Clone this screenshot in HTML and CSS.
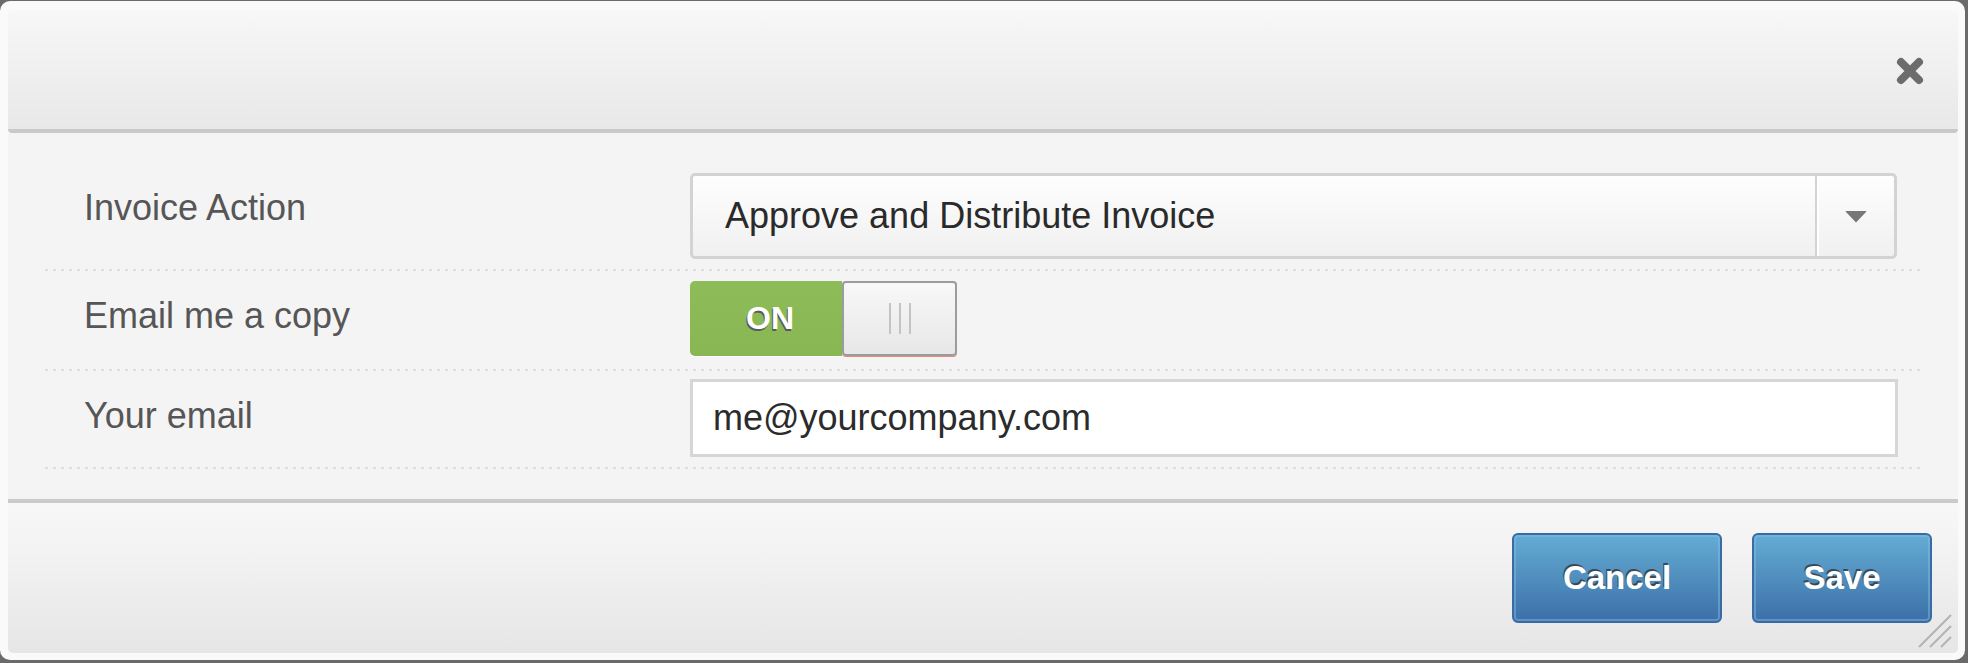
FILE: index.html
```html
<!DOCTYPE html>
<html lang="en">
<head>
<meta charset="utf-8">
<title>Invoice Action</title>
<link rel="stylesheet" href="styles.css">
</head>
<body>
<div class="dialog">
  <div class="header">
    <button class="close" aria-label="Close">
      <svg width="28" height="28" viewBox="0 0 28 28"><path d="M5 5 L23 23 M23 5 L5 23" stroke="#6c6c6c" stroke-width="8" stroke-linecap="round" fill="none"/></svg>
    </button>
  </div>
  <div class="body">
    <div class="row row-1">
      <div class="label">Invoice Action</div>
      <div class="control">
        <div class="select">
          <span class="select-text">Approve and Distribute Invoice</span>
          <span class="select-arrow"><svg width="22" height="12" viewBox="0 0 22 12"><path d="M1 0 H21 Q22 0 21 1 L11 11.5 L1 1 Q0 0 1 0 Z" fill="#777"/></svg></span>
        </div>
      </div>
    </div>
    <div class="sep"></div>
    <div class="row row-2">
      <div class="label">Email me a copy</div>
      <div class="control">
        <div class="toggle">
          <span class="toggle-on">ON</span>
          <span class="toggle-knob"><i></i><i></i><i></i></span>
        </div>
      </div>
    </div>
    <div class="sep"></div>
    <div class="row row-3">
      <div class="label label-3">Your email</div>
      <div class="control">
        <input class="email" type="text" value="me@yourcompany.com">
      </div>
    </div>
    <div class="sep"></div>
  </div>
  <div class="footer">
    <button class="btn btn-cancel">Cancel</button>
    <button class="btn btn-save">Save</button>
  </div>
  <span class="grip"><svg width="34" height="34" viewBox="0 0 34 34"><path d="M1 33 L33 1 M12 33 L33 12 M23 33 L33 23" stroke="#b3b3b3" stroke-width="2" fill="none"/></svg></span>
</div>
</body>
</html>
```

FILE: styles.css
```css
html, body {
  margin: 0;
  padding: 0;
}

body {
  background: #6a6a6a;
  height: 663px;
  overflow: hidden;
  font-family: "Liberation Sans", Arial, sans-serif;
}

.dialog {
  position: relative;
  box-sizing: border-box;
  width: 1965px;
  height: 659px;
  margin-top: 1px;
  padding: 10px 7px 7px 8px;
  background: #fafafa;
  border-radius: 10px;
}

.header {
  box-sizing: border-box;
  height: 122px;
  border-bottom: 4px solid #c9c9c9;
  border-radius: 5px 5px 4px 4px;
  background: linear-gradient(#f7f7f7, #e8e8e8);
  display: flex;
  justify-content: flex-end;
  align-items: center;
  padding: 2px 34px 0 0;
}

.close {
  border: 0;
  padding: 0;
  margin: 0;
  background: none;
  width: 28px;
  height: 28px;
  display: block;
}

.close svg {
  display: block;
}

.body {
  background: #f4f4f4;
  padding: 0 36px 30px 37px;
  height: 366px;
  box-sizing: border-box;
}

.row {
  display: flex;
  align-items: flex-start;
}

.row-1 {
  padding: 40px 0 10px;
}

.row-2 {
  padding: 10px 0 13px;
}

.row-3 {
  padding: 8px 0 10px;
}

.label {
  box-sizing: border-box;
  width: 645px;
  padding: 14px 0 0 39px;
  font-size: 36px;
  line-height: 41px;
  color: #565656;
  white-space: nowrap;
}

.label-3 {
  padding-top: 16px;
}

.control {
  flex: 1;
  padding-right: 24px;
}

.sep {
  height: 2px;
  background: linear-gradient(to right, #dddddd 0 3px, transparent 3px 8px) 0 0 / 8px 2px repeat-x;
}

.select {
  box-sizing: border-box;
  width: 1207px;
  height: 86px;
  display: flex;
  border: 3px solid #d3d3d3;
  border-radius: 5px;
  background: linear-gradient(#fefefe, #f0f0f0);
  box-shadow: inset 0 1px 0 #fff;
}

.select-text {
  flex: 1;
  padding-left: 32px;
  font-size: 36px;
  line-height: 80px;
  color: #2a2a2a;
  white-space: nowrap;
}

.select-arrow {
  width: 76px;
  border-left: 2px solid #d3d3d3;
  box-shadow: inset 2px 0 0 #fff;
  display: flex;
  align-items: center;
  justify-content: center;
  padding-left: 1px;
}

.select-arrow svg {
  display: block;
  margin-top: 1px;
}

.toggle {
  display: flex;
  width: 267px;
  height: 75px;
}

.toggle-on {
  width: 152px;
  background: linear-gradient(#8dbc58, #88b652);
  border-radius: 5px 0 0 5px;
  color: #fff;
  font-weight: bold;
  font-size: 32px;
  display: flex;
  align-items: center;
  justify-content: center;
  padding-left: 8px;
  box-sizing: border-box;
  text-shadow: -1px 2px 0 #5a5a5a;
  box-shadow: 0 1px 0 #fff;
}

.toggle-knob {
  box-sizing: border-box;
  width: 115px;
  border: 2px solid #9c9c9c;
  border-radius: 4px;
  background: linear-gradient(#f8f8f8, #e7e7e7);
  box-shadow: 0 1px 0 #e68a80;
  display: flex;
  align-items: center;
  justify-content: center;
  gap: 8px;
}

.toggle-knob i {
  display: block;
  width: 2px;
  height: 31px;
  background: #c3c3c3;
}

.email {
  box-sizing: border-box;
  width: 1208px;
  height: 78px;
  margin: 0;
  border: 3px solid #d6d6d6;
  padding: 0 0 0 20px;
  background: #fff;
  font-family: "Liberation Sans", Arial, sans-serif;
  font-size: 36px;
  color: #2b2b2b;
  outline: none;
  display: block;
}

.footer {
  box-sizing: border-box;
  height: 154px;
  border-top: 4px solid #cacaca;
  border-radius: 0 0 5px 5px;
  background: linear-gradient(#f8f8f8, #e6e6e6);
  display: flex;
  justify-content: flex-end;
  align-items: flex-start;
  gap: 30px;
  padding: 30px 26px 0 0;
}

.btn {
  box-sizing: border-box;
  height: 90px;
  margin: 0;
  padding: 0;
  border: 2px solid #3a6ba2;
  border-radius: 6px;
  background: linear-gradient(#64acd4, #3c70a8);
  box-shadow: inset 0 0 0 2px rgba(130, 190, 230, 0.45);
  color: #fff;
  font-family: "Liberation Sans", Arial, sans-serif;
  font-weight: bold;
  font-size: 33px;
  text-shadow: -1px -2px 0 rgba(50, 50, 50, 0.75);
}

.btn-cancel {
  width: 210px;
}

.btn-save {
  width: 180px;
}

.grip {
  position: absolute;
  right: 13px;
  bottom: 12px;
  width: 34px;
  height: 34px;
}

.grip svg {
  display: block;
}
```
